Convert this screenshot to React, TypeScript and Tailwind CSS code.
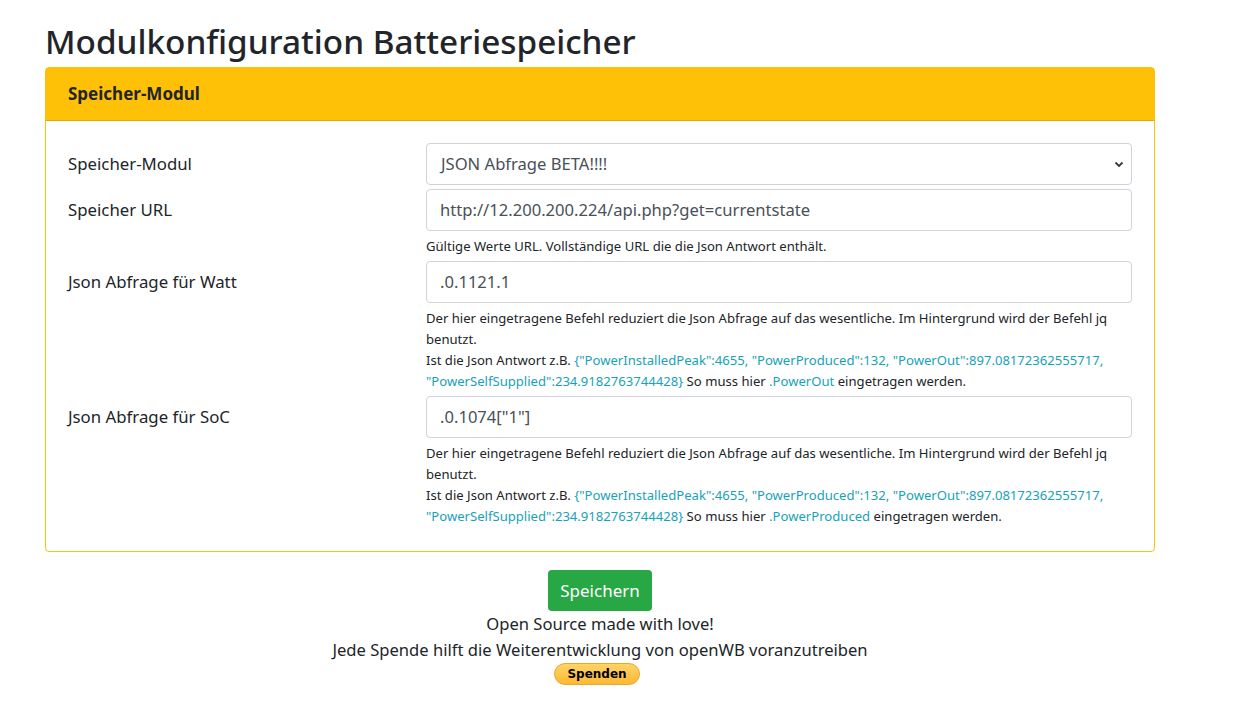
import React from 'react';

const font = "font-['Segoe_UI','Noto_Sans',sans-serif]";

function Link({ children }: { children: React.ReactNode }) {
  return <span className="text-[#17a2b8]">{children}</span>;
}

function JqHelp({ field }: { field: string }) {
  return (
    <div className="mt-[5px] text-[13.1px] leading-[21px] text-[#212529]">
      Der hier eingetragene Befehl reduziert die Json Abfrage auf das wesentliche. Im Hintergrund wird der Befehl jq
      <br />
      benutzt.
      <br />
      Ist die Json Antwort z.B.{' '}
      <Link>{'{"PowerInstalledPeak":4655, "PowerProduced":132, "PowerOut":897.08172362555717,'}</Link>
      <br />
      <Link>{'"PowerSelfSupplied":234.9182763744428}'}</Link> So muss hier <Link>{field}</Link> eingetragen werden.
    </div>
  );
}

function Row({
  label,
  children,
  help,
}: {
  label: string;
  children: React.ReactNode;
  help?: React.ReactNode;
}) {
  return (
    <div className="mb-[4px] flex">
      <div className="flex h-[42px] w-[358px] shrink-0 items-center text-[16.8px]">{label}</div>
      <div className="flex-1">
        {children}
        {help}
      </div>
    </div>
  );
}

function TextInput({ value }: { value: string }) {
  return (
    <div className="flex h-[42px] items-center rounded-[4px] border border-[#ced4da] bg-white px-[13px] text-[16.6px] text-[#495057]">
      {value}
    </div>
  );
}

export default function App() {
  return (
    <div className={`min-h-screen bg-white text-[#212529] ${font}`}>
      <div className="ml-[45px] w-[1110px] pt-[17px]">
        <h1 className="mb-[2px] text-[33.3px] leading-[48px] font-medium">Modulkonfiguration Batteriespeicher</h1>

        <div className="rounded-[4px] border border-[#ffc107]">
          <div className="flex h-[53px] items-center border-b border-[#e0a800] bg-[#ffc107] px-[22px] text-[17px] font-bold">
            Speicher-Modul
          </div>
          <div className="px-[22px] pt-[22px] pb-[20px]">
            <Row label="Speicher-Modul">
              <div className="relative flex h-[42px] items-center rounded-[4px] border border-[#ced4da] bg-white px-[14px] text-[16.6px] text-[#495057]">
                JSON Abfrage BETA!!!!
                <svg className="absolute right-[7px] h-[7px] w-[10px]" viewBox="0 0 10 7" fill="none">
                  <path d="M1.5 1.5 5 5l3.5-3.5" stroke="#343a40" strokeWidth="1.8" />
                </svg>
              </div>
            </Row>
            <Row
              label="Speicher URL"
              help={
                <div className="mt-[5px] text-[13.1px] leading-[21px]">
                  Gültige Werte URL. Vollständige URL die die Json Antwort enthält.
                </div>
              }
            >
              <TextInput value="http://12.200.200.224/api.php?get=currentstate" />
            </Row>
            <Row label="Json Abfrage für Watt" help={<JqHelp field=".PowerOut" />}>
              <TextInput value=".0.1121.1" />
            </Row>
            <Row label="Json Abfrage für SoC" help={<JqHelp field=".PowerProduced" />}>
              <TextInput value='.0.1074["1"]' />
            </Row>
          </div>
        </div>

        <div className="mt-[18px] flex flex-col items-center">
          <button className="h-[41px] rounded-[4px] bg-[#28a745] px-[12px] text-[17px] text-white">Speichern</button>
          <div className="text-[16.6px] leading-[26px]">Open Source made with love!</div>
          <div className="text-[16.6px] leading-[26px]">Jede Spende hilft die Weiterentwicklung von openWB voranzutreiben</div>
          <button className="mr-[6px] flex h-[22px] w-[86px] items-center justify-center rounded-full border border-[#e9a825] bg-gradient-to-b from-[#ffd465] to-[#fdb833] font-['DejaVu_Sans',sans-serif] text-[12px] font-bold text-black">
            Spenden
          </button>
        </div>
      </div>
    </div>
  );
}
